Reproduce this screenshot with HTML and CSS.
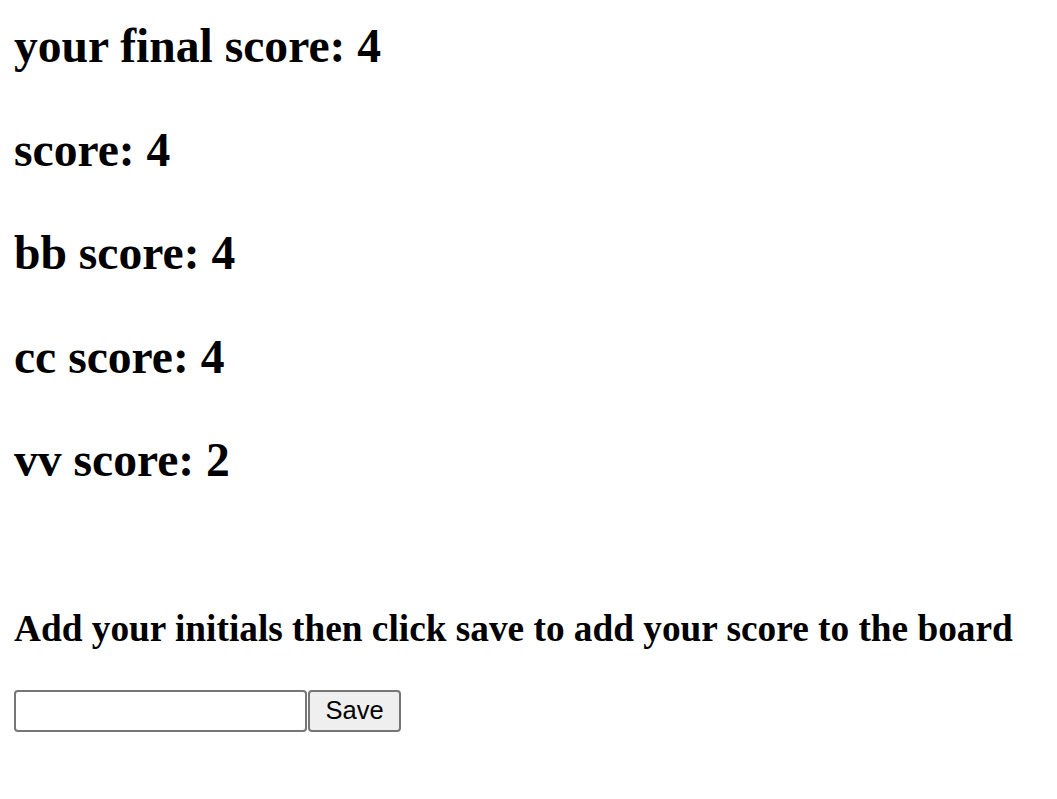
FILE: index.html
```html
<!DOCTYPE html>
<html>
<head>
<meta charset="utf-8">
<link rel="stylesheet" href="styles.css">
</head>
<body>
<main class="page">
  <section class="scores">
    <h2 class="score">your final score: 4</h2>
    <h2 class="score">score: 4</h2>
    <h2 class="score">bb score: 4</h2>
    <h2 class="score">cc score: 4</h2>
    <h2 class="score">vv score: 2</h2>
  </section>
  <h3 class="prompt">Add your initials then click save to add your score to the board</h3>
  <form class="save-form">
    <input class="initials" type="text">
    <button class="save-btn" type="button">Save</button>
  </form>
</main>
</body>
</html>
```
FILE: styles.css
```css
html, body {
  margin: 0;
  padding: 0;
  background: #fff;
}
.page {
  padding: 20px 14px 0 14px;
  font-family: "Liberation Serif", "Times New Roman", serif;
  color: #000;
}
.scores {
  display: flex;
  flex-direction: column;
  gap: 50.6px;
}
.score {
  margin: 0;
  font-size: 47.6px;
  font-weight: bold;
  line-height: 53px;
  white-space: nowrap;
}
.prompt {
  margin: 121px 0 0 0;
  font-size: 37.3px;
  font-weight: bold;
  line-height: 41.5px;
  white-space: nowrap;
}
.save-form {
  margin-top: 40px;
  display: flex;
  gap: 1px;
}
.initials {
  box-sizing: border-box;
  width: 293px;
  height: 42px;
  margin: 0;
  border: 2px solid #767676;
  border-radius: 4px;
  background: #fff;
  padding: 2px 4px;
  font-size: 23px;
}
.save-btn {
  box-sizing: border-box;
  width: 93px;
  height: 42px;
  margin: 0;
  border: 2px solid #767676;
  border-radius: 4px;
  background: #efefef;
  font-family: "Liberation Sans", Arial, sans-serif;
  font-size: 25.5px;
  color: #000;
  padding: 0;
}
```
